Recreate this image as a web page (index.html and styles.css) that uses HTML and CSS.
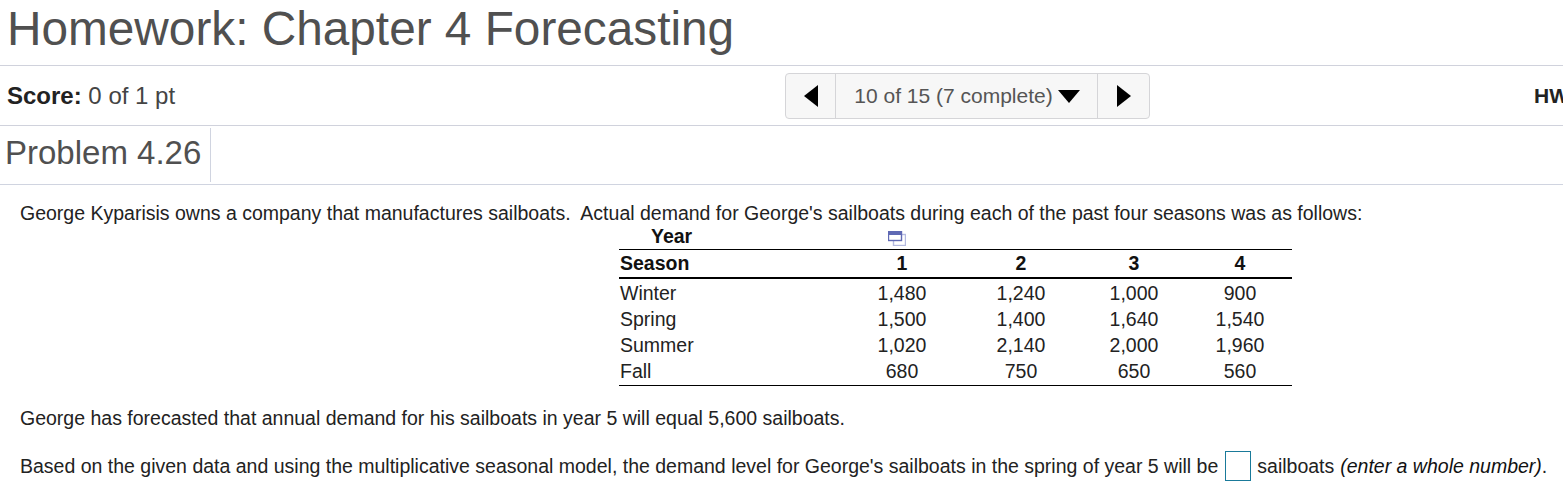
FILE: index.html
```html
<!DOCTYPE html>
<html lang="en">
  <head>
    <meta charset="UTF-8" />
    <meta name="viewport" content="width=device-width, initial-scale=1.0" />
    <title>Homework: Chapter 4 Forecasting</title>
    <link rel="stylesheet" href="styles.css">
  </head>
  <body>
    <h1 class="page-title">Homework: Chapter 4 Forecasting</h1>

    <div class="score-bar">
      <div class="score"><b>Score:</b> 0 of 1 pt</div>
      <div class="pager">
        <button class="pager-arrow" type="button"><span class="tri tri-left"></span></button>
        <div class="pager-label">10 of 15 (7 complete)<span class="tri tri-down"></span></div>
        <button class="pager-arrow pager-next" type="button"><span class="tri tri-right"></span></button>
      </div>
      <div class="hw-score">HW</div>
    </div>

    <div class="problem-bar">
      <h2 class="problem-title">Problem 4.26</h2>
    </div>

    <div class="question">
      <p class="intro">George Kyparisis owns a company that manufactures sailboats.&nbsp; Actual demand for George's sailboats during each of the past four seasons was as follows:</p>

      <table class="demand">
        <thead>
          <tr class="year-row">
            <th class="year-label">Year</th>
            <th class="copy-cell">
              <svg class="copy-icon" width="18" height="15" viewBox="0 0 18 15">
                <rect x="5.5" y="3.5" width="12" height="11" fill="#fff" stroke="#b4bae0" stroke-width="1.4" />
                <rect x="0.5" y="0.5" width="13" height="9" fill="#fff" stroke="#5f69b4" stroke-width="1.4" />
                <rect x="1" y="1" width="12" height="3" fill="#5f69b4" />
              </svg>
            </th>
            <th></th>
            <th></th>
            <th></th>
          </tr>
          <tr class="season-row">
            <th class="name-col">Season</th>
            <th>1</th>
            <th>2</th>
            <th>3</th>
            <th>4</th>
          </tr>
        </thead>
        <tbody>
          <tr><td class="name-col">Winter</td><td>1,480</td><td>1,240</td><td>1,000</td><td>900</td></tr>
          <tr><td class="name-col">Spring</td><td>1,500</td><td>1,400</td><td>1,640</td><td>1,540</td></tr>
          <tr><td class="name-col">Summer</td><td>1,020</td><td>2,140</td><td>2,000</td><td>1,960</td></tr>
          <tr><td class="name-col">Fall</td><td>680</td><td>750</td><td>650</td><td>560</td></tr>
        </tbody>
      </table>

      <p class="forecast">George has forecasted that annual demand for his sailboats in year 5 will equal 5,600 sailboats.</p>

      <p class="answer">Based on the given data and using the multiplicative seasonal model, the demand level for George's sailboats in the spring of year 5 will be <input class="answer-box" type="text" /> sailboats <i>(enter a whole number)</i>.</p>
    </div>
  </body>
</html>
```

FILE: styles.css
```css
* {
  margin: 0;
  padding: 0;
  box-sizing: border-box;
}

body {
  font-family: "Liberation Sans", Arial, sans-serif;
  background-color: #fff;
  color: #333;
  overflow: hidden;
}

.page-title {
  height: 66px;
  padding-left: 7px;
  font-size: 47.75px;
  line-height: 57px;
  font-weight: normal;
  color: #505050;
  border-bottom: 1px solid #d0d2dc;
  white-space: nowrap;
}

.score-bar {
  display: flex;
  align-items: center;
  height: 60px;
  padding-left: 7px;
  border-bottom: 1px solid #d0d2dc;
  white-space: nowrap;
  overflow: hidden;
  font-size: 24px;
}

.score {
  flex: none;
  width: 778px;
  color: #444;
}

.score b {
  color: #222;
}

.pager {
  display: flex;
  flex: none;
  width: 365px;
  height: 46px;
  background-color: #f7f7f7;
  border: 1px solid #d5d5d8;
  border-radius: 4px;
  margin-top: 1px;
}

.pager-arrow {
  display: flex;
  flex: none;
  align-items: center;
  justify-content: center;
  width: 50px;
  background: none;
  border: none;
  border-right: 1px solid #d5d5d8;
}

.pager-next {
  width: 52px;
  border-right: none;
  border-left: 1px solid #d5d5d8;
}

.pager-label {
  display: flex;
  align-items: center;
  justify-content: center;
  flex: 1;
  padding-left: 1px;
  font-size: 21px;
  color: #555;
}

.tri {
  display: block;
  width: 0;
  height: 0;
  border-style: solid;
  border-color: transparent;
}

.tri-left {
  border-width: 11px 14px 11px 0;
  border-right-color: #000;
}

.tri-right {
  border-width: 11px 0 11px 14px;
  border-left-color: #000;
}

.tri-down {
  margin-left: 5px;
  border-width: 13px 11px 0 11px;
  border-top-color: #000;
}

.hw-score {
  flex: none;
  margin-left: 384px;
  font-weight: bold;
  font-size: 21px;
  color: #222;
}

.problem-bar {
  height: 59px;
  padding: 2px 0 0 5px;
  border-bottom: 1px solid #d0d4e0;
}

.problem-title {
  display: inline-block;
  width: 206px;
  height: 54px;
  font-size: 33px;
  line-height: 50px;
  font-weight: normal;
  color: #505050;
  border-right: 1px solid #d0d4e0;
}

.question {
  padding: 16px 0 0 20px;
  font-size: 19.5px;
  color: #222;
  white-space: nowrap;
}

.intro {
  line-height: 24px;
}

.demand {
  width: 673px;
  margin-left: 599px;
  border-collapse: collapse;
  table-layout: fixed;
  margin-top: -1px;
  color: #222;
}

.demand th,
.demand td {
  text-align: center;
  padding: 0;
  font-size: 19.5px;
}

.demand .name-col {
  width: 223px;
  text-align: left;
  padding-left: 1px;
}

.demand tbody td {
  height: 26px;
  line-height: 26px;
}

.demand tbody tr:first-child td {
  height: 27px;
  padding-top: 1px;
}

.demand th:nth-child(2) { width: 120px; }
.demand th:nth-child(3) { width: 118px; }
.demand th:nth-child(4) { width: 108px; }
.demand th:nth-child(5) { width: 104px; }

.year-row th {
  height: 25px;
  color: #111;
  border-bottom: 1px solid #000;
}

.demand .year-label {
  text-align: left;
  padding-left: 32px;
}

.copy-icon {
  display: block;
  margin: 4px 0 0 46px;
}

.season-row th {
  height: 29px;
  padding-top: 1px;
  color: #111;
  border-bottom: 2px solid #000;
}

.demand tbody tr:last-child td {
  height: 27px;
  border-bottom: 1px solid #000;
}

.forecast {
  margin-top: 20px;
  line-height: 24px;
}

.answer {
  display: flex;
  align-items: center;
  margin-top: 21px;
  line-height: 30px;
}

.answer i {
  color: #111;
  margin-left: 6px;
}

.answer-box {
  width: 26px;
  height: 30px;
  margin: 0 6px 0 7px;
  background: #fff;
  border: 1px solid #1a7a9a;
}
```
